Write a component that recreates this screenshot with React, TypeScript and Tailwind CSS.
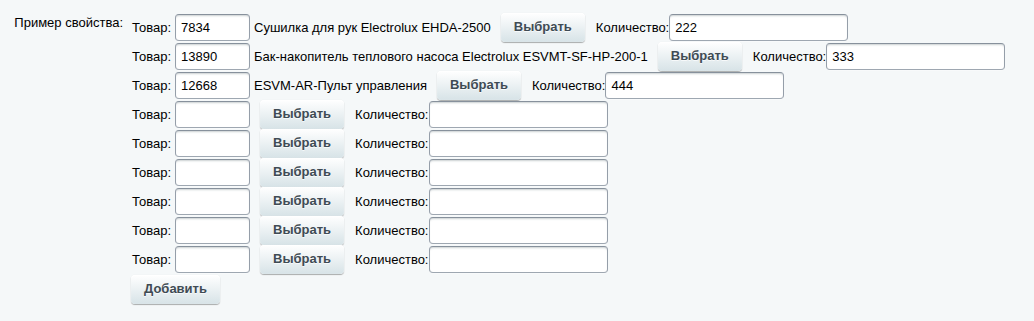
import React from "react";

type Item = { id: string; name: string; qty: string };

const items: Item[] = [
	{ id: "7834", name: "Сушилка для рук Electrolux EHDA-2500", qty: "222" },
	{
		id: "13890",
		name: "Бак-накопитель теплового насоса Electrolux ESVMT-SF-HP-200-1",
		qty: "333",
	},
	{ id: "12668", name: "ESVM-AR-Пульт управления", qty: "444" },
	{ id: "", name: "", qty: "" },
	{ id: "", name: "", qty: "" },
	{ id: "", name: "", qty: "" },
	{ id: "", name: "", qty: "" },
	{ id: "", name: "", qty: "" },
	{ id: "", name: "", qty: "" },
];

const inputCls =
	"h-[27px] px-[5px] text-[13px] text-black bg-white rounded-[4px] border border-solid border-t-[#87919c] border-x-[#959ea9] border-b-[#9ea7b1] shadow-[0_1px_0_0_rgba(255,255,255,0.3),inset_0_2px_2px_-1px_rgba(180,188,191,0.7)] outline-none";

const btnCls =
	"h-[29px] px-[13px] pb-[2px] text-[13px] font-bold text-[#3f4b54] rounded-[4px] bg-[linear-gradient(to_top,#d7e3e7,#ffffff)] shadow-[0_0_1px_rgba(0,0,0,0.11),0_1px_1px_rgba(0,0,0,0.3),inset_0_1px_#fff,inset_0_0_1px_rgba(255,255,255,0.5)] [text-shadow:0_1px_rgba(255,255,255,0.7)] cursor-pointer";

function ProductRow({ item }: { item: Item }) {
	return (
		<div className="flex items-center h-[29px] whitespace-nowrap">
			<span>Товар:</span>
			<input
				className={`${inputCls} w-[75px] ml-[4px]`}
				defaultValue={item.id}
			/>
			{item.name && <span className="ml-[4px]">{item.name}</span>}
			<button className={`${btnCls} ml-[10px]`}>Выбрать</button>
			<span className="ml-[11px]">Количество:</span>
			<input className={`${inputCls} w-[179px]`} defaultValue={item.qty} />
		</div>
	);
}

export default function App() {
	return (
		<div
			className="min-h-[321px] w-full bg-[#f5f8f9] text-[13px] text-black"
			style={{ fontFamily: '"Liberation Sans", Arial, sans-serif' }}
		>
			<div className="flex">
				<div className="w-[123px] shrink-0 text-right pt-[13px]">
					Пример свойства:
				</div>
				<div className="ml-[9px] pt-[13px]">
					{items.map((item, i) => (
						<ProductRow key={i} item={item} />
					))}
					<button className={`${btnCls} mt-[1px] -ml-[1px]`}>Добавить</button>
				</div>
			</div>
		</div>
	);
}
